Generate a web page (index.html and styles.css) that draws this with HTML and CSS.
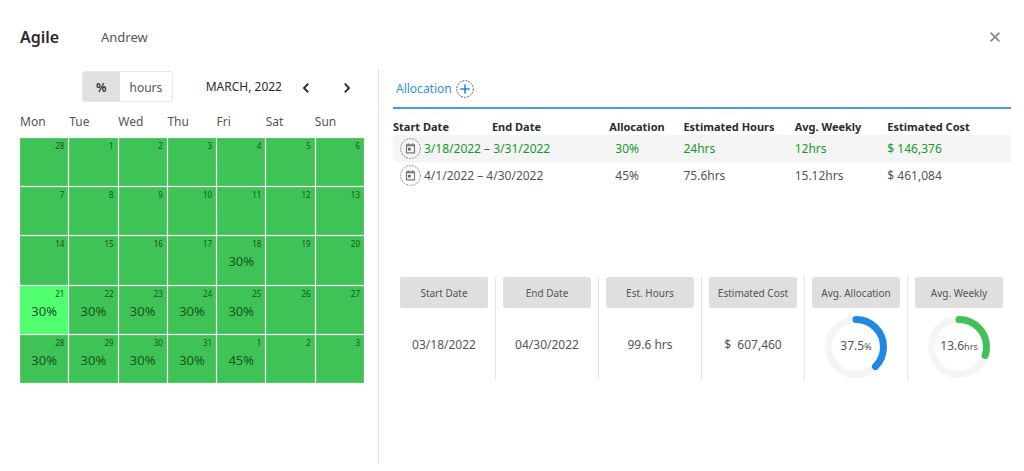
FILE: index.html
```html
<!DOCTYPE html>
<html lang="en">
<head>
<meta charset="utf-8">
<meta name="viewport" content="width=device-width, initial-scale=1">
<title>Agile – Andrew</title>
<link rel="stylesheet" href="styles.css">
</head>
<body>
<header class="top">
  <h1 class="project">Agile</h1>
  <span class="person">Andrew</span>
  <button class="icon-btn close" aria-label="Close"><svg width="10" height="10" viewBox="0 0 10 10"><path d="M.6 .6l8.800 8.800M9.400 .6L.6 9.400" stroke="#858585" stroke-width="1.600"/></svg></button>
</header>
<main class="layout">
  <section class="calendar-panel">
    <div class="controls">
      <div class="toggle">
        <button class="toggle-btn active" aria-pressed="true">%</button>
        <button class="toggle-btn" aria-pressed="false">hours</button>
      </div>
      <span class="month">MARCH, 2022</span>
      <button class="icon-btn prev" aria-label="Previous month"><svg width="8" height="12" viewBox="0 0 8 12"><path d="M6.200 1.600L2 6l4.200 4.400" fill="none" stroke="#2b2b2b" stroke-width="1.900"/></svg></button>
      <button class="icon-btn" aria-label="Next month"><svg width="8" height="12" viewBox="0 0 8 12"><path d="M1.800 1.600L6 6l-4.200 4.400" fill="none" stroke="#2b2b2b" stroke-width="1.900"/></svg></button>
    </div>
    <div class="weekdays"><span>Mon</span><span>Tue</span><span>Wed</span><span>Thu</span><span>Fri</span><span>Sat</span><span>Sun</span></div>
    <div class="days">
      <div class="day"><span class="num">28</span></div>
      <div class="day"><span class="num">1</span></div>
      <div class="day"><span class="num">2</span></div>
      <div class="day"><span class="num">3</span></div>
      <div class="day"><span class="num">4</span></div>
      <div class="day"><span class="num">5</span></div>
      <div class="day"><span class="num">6</span></div>
      <div class="day"><span class="num">7</span></div>
      <div class="day"><span class="num">8</span></div>
      <div class="day"><span class="num">9</span></div>
      <div class="day"><span class="num">10</span></div>
      <div class="day"><span class="num">11</span></div>
      <div class="day"><span class="num">12</span></div>
      <div class="day"><span class="num">13</span></div>
      <div class="day"><span class="num">14</span></div>
      <div class="day"><span class="num">15</span></div>
      <div class="day"><span class="num">16</span></div>
      <div class="day"><span class="num">17</span></div>
      <div class="day"><span class="num">18</span><span class="load">30%</span></div>
      <div class="day"><span class="num">19</span></div>
      <div class="day"><span class="num">20</span></div>
      <div class="day today"><span class="num">21</span><span class="load">30%</span></div>
      <div class="day"><span class="num">22</span><span class="load">30%</span></div>
      <div class="day"><span class="num">23</span><span class="load">30%</span></div>
      <div class="day"><span class="num">24</span><span class="load">30%</span></div>
      <div class="day"><span class="num">25</span><span class="load">30%</span></div>
      <div class="day"><span class="num">26</span></div>
      <div class="day"><span class="num">27</span></div>
      <div class="day"><span class="num">28</span><span class="load">30%</span></div>
      <div class="day"><span class="num">29</span><span class="load">30%</span></div>
      <div class="day"><span class="num">30</span><span class="load">30%</span></div>
      <div class="day"><span class="num">31</span><span class="load">30%</span></div>
      <div class="day"><span class="num">1</span><span class="load">45%</span></div>
      <div class="day"><span class="num">2</span></div>
      <div class="day"><span class="num">3</span></div>
    </div>
  </section>
  <section class="detail">
    <div class="tab">
      <span>Allocation</span>
      <button class="icon-btn" aria-label="Add allocation"><svg width="18" height="18" viewBox="0 0 18 18"><circle cx="9" cy="9" r="8.300" fill="none" stroke="#555" stroke-width=".9" stroke-dasharray="2 1"/><path d="M9 4.300v9.400M4.300 9h9.400" stroke="#1e88e5" stroke-width="1.500"/></svg></button>
    </div>
    <table class="allocations">
      <colgroup><col class="c-start"><col class="c-end"><col class="c-alloc"><col class="c-hours"><col class="c-week"><col class="c-cost"></colgroup>
      <thead><tr><th>Start Date</th><th>End Date</th><th>Allocation</th><th>Estimated Hours</th><th>Avg. Weekly</th><th>Estimated Cost</th></tr></thead>
      <tbody>
        <tr class="current">
          <td colspan="2"><div class="range"><button class="icon-btn" aria-label="Edit dates"><svg width="21" height="21" viewBox="0 0 21 21"><circle cx="10.500" cy="10.500" r="9.900" fill="none" stroke="#777" stroke-width=".8" stroke-dasharray="2 1"/><path d="M6.500 6.800h8v8h-8zM6.500 7.600h8M8.300 5.300v2M12.700 5.300v2" fill="none" stroke="#777" stroke-width="1.200"/><path d="M8 9.800h2.700v2.700H8z" fill="#666"/></svg></button><span>3/18/2022 <i class="dash">–</i> 3/31/2022</span></div></td>
          <td class="pct">30%</td><td>24hrs</td><td>12hrs</td><td>$ 146,376</td>
        </tr>
        <tr>
          <td colspan="2"><div class="range"><button class="icon-btn" aria-label="Edit dates"><svg width="21" height="21" viewBox="0 0 21 21"><circle cx="10.500" cy="10.500" r="9.900" fill="none" stroke="#777" stroke-width=".8" stroke-dasharray="2 1"/><path d="M6.500 6.800h8v8h-8zM6.500 7.600h8M8.300 5.300v2M12.700 5.300v2" fill="none" stroke="#777" stroke-width="1.200"/><path d="M8 9.800h2.700v2.700H8z" fill="#666"/></svg></button><span>4/1/2022 <i class="dash">–</i> 4/30/2022</span></div></td>
          <td class="pct">45%</td><td>75.6hrs</td><td>15.12hrs</td><td>$ 461,084</td>
        </tr>
      </tbody>
    </table>
    <div class="summary">
      <div class="stat"><div class="label">Start Date</div><div class="value">03/18/2022</div></div>
      <div class="stat"><div class="label">End Date</div><div class="value">04/30/2022</div></div>
      <div class="stat"><div class="label">Est. Hours</div><div class="value">99.6 hrs</div></div>
      <div class="stat"><div class="label">Estimated Cost</div><div class="value">$&nbsp; 607,460</div></div>
      <div class="stat"><div class="label">Avg. Allocation</div><div class="value ring">
        <svg width="62" height="62" viewBox="0 0 62 62"><circle class="track" cx="31" cy="31" r="27.500"/><circle class="arc blue" cx="31" cy="31" r="27.500" pathLength="100" stroke-dasharray="37.500 100" transform="rotate(-90 31 31)"/></svg>
        <span>37.5<small>%</small></span></div></div>
      <div class="stat"><div class="label">Avg. Weekly</div><div class="value ring">
        <svg width="62" height="62" viewBox="0 0 62 62"><circle class="track" cx="31" cy="31" r="27.500"/><circle class="arc green" cx="31" cy="31" r="27.500" pathLength="100" stroke-dasharray="30 100" transform="rotate(-90 31 31)"/></svg>
        <span>13.6<small>hrs</small></span></div></div>
    </div>
  </section>
</main>
</body>
</html>
```
FILE: styles.css
```css
* { box-sizing: border-box; }

body {
  margin: 0;
  background: #fff;
  color: #555;
  font: 12px/16px "Segoe UI", "Noto Sans", "Open Sans", sans-serif;
}

button { font: inherit; color: inherit; cursor: pointer; }

.icon-btn {
  display: flex;
  padding: 0;
  border: 0;
  background: none;
}

.top {
  display: flex;
  align-items: center;
  height: 69px;
  padding: 4px 24px 0 20px;
}

.project {
  width: 81px;
  margin: 0;
  color: #2b2b2b;
  font-size: 16px;
  font-weight: 600;
}

.person { font-size: 13px; }
.close { margin-left: auto; }

.layout {
  display: grid;
  grid-template-columns: 359fr 632fr;
  min-height: 395px;
  padding: 0 13px 0 20px;
}

.calendar-panel {
  padding-right: 14px;
  border-right: 1px solid #e6e6e6;
}

.controls {
  display: flex;
  align-items: center;
  padding: 2px 13px 0 62px;
}

.toggle {
  display: flex;
  height: 31px;
  border: 1px solid #e8e8e8;
  border-radius: 3px;
  overflow: hidden;
}

.toggle-btn {
  padding: 2px 10px 0;
  border: 0;
  background: #fff;
}

.toggle-btn.active {
  padding: 2px 13px 0;
  background: #e0e0e0;
  color: #2b2b2b;
  font-weight: 600;
}

.month {
  margin-left: auto;
  padding-top: 1px;
  color: #2b2b2b;
}

.icon-btn.prev { margin: 0 33px 0 20px; }
.controls > .icon-btn { padding-top: 2px; }

.weekdays {
  display: grid;
  grid-template-columns: repeat(7, 1fr);
  padding: 12px 0 8px;
}

.days {
  display: grid;
  grid-template-columns: repeat(7, 1fr);
  grid-template-rows: repeat(5, 1fr);
  gap: 1px;
  height: 245px;
}

.day {
  display: flex;
  flex-direction: column;
  padding: 1px 3px;
  border: 1px solid #52c868;
  background: #3fc356;
  color: #17551f;
}

.today { border-color: #52ff70; background: #52ff70; }

.num {
  font-size: 8px;
  line-height: 12px;
  text-align: right;
}

.load {
  font-size: 13px;
  line-height: 22px;
  text-align: center;
}

.detail { padding-left: 14px; }

.tab {
  display: flex;
  align-items: center;
  gap: 4px;
  height: 40px;
  padding: 1px 0 0 3px;
  border-bottom: 2px solid #429de8;
  color: #2f8fe6;
}

.allocations {
  width: 100%;
  table-layout: fixed;
  border-collapse: collapse;
}

.c-start { width: 16%; }
.c-end { width: 19%; }
.c-alloc { width: 12%; }
.c-hours { width: 18%; }
.c-week { width: 15%; }
.c-cost { width: 20%; }

.allocations th {
  padding: 10px 0 0;
  color: #2b2b2b;
  font-size: 11px;
  font-weight: 700;
  text-align: left;
  white-space: nowrap;
}

.allocations td { height: 27px; padding: 0; }
.allocations .pct { padding-left: 6px; }
.current { color: #149a2c; }
.current td { background: #f4f4f4; }
.current td:first-child { border-radius: 3px 0 0 3px; }
.current td:last-child { border-radius: 0 3px 3px 0; }

.range {
  display: flex;
  align-items: center;
  gap: 3px;
  padding-left: 7px;
}

.dash { color: #555; font-style: normal; }

.summary {
  display: grid;
  grid-template-columns: repeat(6, 1fr);
  margin-top: 88px;
}

.stat {
  padding: 0 7px;
  border-right: 1px solid #e6e6e6;
}

.stat:last-child { border-right-color: transparent; }

.label {
  padding-top: 1px;
  border-radius: 3px;
  background: #dfdfdf;
  font-size: 10px;
  line-height: 30px;
  text-align: center;
  white-space: nowrap;
}

.value {
  display: grid;
  place-items: center;
  height: 72px;
  padding-top: 2px;
}

.value.ring { padding-top: 5px; }
.ring > * { grid-area: 1 / 1; }
.ring small { font-size: 9px; }
.track { fill: none; stroke: #f4f4f4; stroke-width: 7; }
.arc { fill: none; stroke-width: 7; stroke-linecap: round; }
.blue { stroke: #1e88e5; }
.green { stroke: #3fc356; }
```
